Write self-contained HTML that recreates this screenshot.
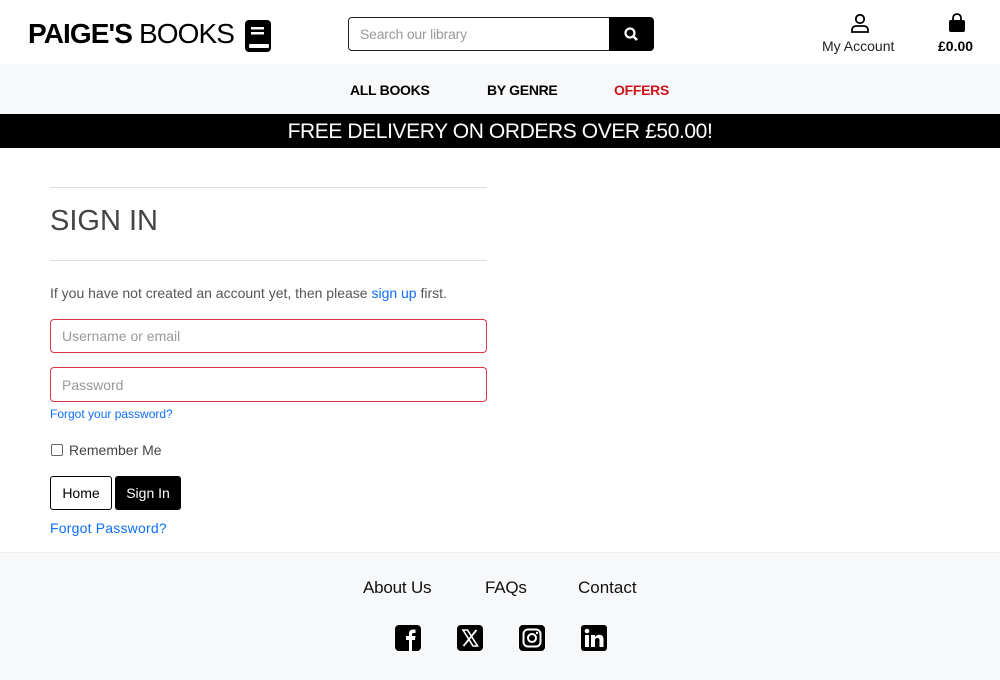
<!DOCTYPE html>
<html><head><style>
*{box-sizing:border-box;margin:0;padding:0}
body{width:1000px;height:680px;overflow:hidden;font-family:"Liberation Sans",sans-serif;background:#fff;color:#555;position:relative}
.a{position:absolute}
a{text-decoration:none}
</style></head><body>
<div class="a" style="left:28px;top:18px;font-size:28px;color:#000;letter-spacing:-0.9px;white-space:nowrap"><b>PAIGE'S</b> BOOKS</div>
<svg class="a" style="left:245px;top:20px" width="26" height="32" viewBox="0 0 26 32"><rect x="0" y="0" width="26" height="32" rx="4" fill="#000"/><rect x="6" y="7" width="13" height="2.5" fill="#fff"/><rect x="6" y="12" width="13" height="2.5" fill="#fff"/><rect x="4" y="24" width="20" height="4" rx="1" fill="#fff"/></svg>
<div class="a" style="left:348px;top:17px;width:262px;height:34px;border:1px solid #222;border-radius:4px 0 0 4px;font-size:14px;color:#999;padding:8px 11px;letter-spacing:-0.2px">Search our library</div>
<div class="a" style="left:609px;top:17px;width:45px;height:34px;background:#000;border-radius:0 4px 4px 0"><svg width="45" height="34"><circle cx="21" cy="16" r="4.5" stroke="#fff" stroke-width="2.2" fill="none"/><line x1="24.5" y1="19.5" x2="28" y2="23" stroke="#fff" stroke-width="2.5"/></svg></div>
<svg class="a" style="left:850px;top:13px" width="20" height="20"><circle cx="10" cy="6" r="4.2" stroke="#000" stroke-width="1.8" fill="none"/><path d="M2 19v-2a4 4 0 0 1 4-4h8a4 4 0 0 1 4 4v2z" stroke="#000" stroke-width="1.8" fill="none"/></svg>
<div class="a" style="left:822px;top:38px;font-size:14px;color:#222;letter-spacing:0">My Account</div>
<svg class="a" style="left:947px;top:13px" width="20" height="20"><path d="M6 7V5a4 4 0 0 1 8 0v2" stroke="#000" stroke-width="1.8" fill="none"/><rect x="2" y="7" width="16" height="12" rx="2" fill="#000"/></svg>
<div class="a" style="left:938px;top:38px;font-size:14px;color:#000;font-weight:bold;letter-spacing:0">£0.00</div>
<div class="a" style="left:0;top:64px;width:1000px;height:50px;background:#f7f8fa"></div>
<div class="a" style="left:350px;top:82px;font-size:14px;font-weight:bold;color:#000;letter-spacing:-0.3px">ALL BOOKS</div>
<div class="a" style="left:487px;top:82px;font-size:14px;font-weight:bold;color:#000;letter-spacing:-0.3px">BY GENRE</div>
<div class="a" style="left:614px;top:82px;font-size:14px;font-weight:bold;color:#d0141b;letter-spacing:-0.3px">OFFERS</div>
<div class="a" style="left:0;top:114px;width:1000px;height:34px;background:#000;color:#fff;font-size:21px;text-align:center;line-height:35px;letter-spacing:-0.4px">FREE DELIVERY ON ORDERS OVER £50.00!</div>
<div class="a" style="left:50px;top:187px;width:437px;border-top:1px solid #ddd"></div>
<div class="a" style="left:50px;top:205px;font-size:29px;color:#444">SIGN IN</div>
<div class="a" style="left:50px;top:260px;width:437px;border-top:1px solid #ddd"></div>
<div class="a" style="left:50px;top:285px;font-size:14px;color:#555;letter-spacing:0">If you have not created an account yet, then please <a style="color:#0d6efd">sign up</a> first.</div>
<div class="a" style="left:50px;top:319px;width:437px;height:34px;border:1px solid #dc3545;border-radius:4px;font-size:14px;color:#999;padding:8px 11px">Username or email</div>
<div class="a" style="left:50px;top:367px;width:437px;height:35px;border:1px solid #dc3545;border-radius:4px;font-size:14px;color:#999;padding:9px 11px">Password</div>
<div class="a" style="left:50px;top:407px;font-size:12px;color:#0d6efd">Forgot your password?</div>
<div class="a" style="left:51px;top:444px;width:12px;height:12px;border:1px solid #666;border-radius:2px"></div>
<div class="a" style="left:69px;top:442px;font-size:14px;color:#444">Remember Me</div>
<div class="a" style="left:50px;top:476px;width:62px;height:34px;border:1px solid #000;border-radius:3px;font-size:14px;color:#000;text-align:center;line-height:32px">Home</div>
<div class="a" style="left:115px;top:476px;width:66px;height:34px;background:#000;border-radius:3px;font-size:14px;color:#fff;text-align:center;line-height:34px">Sign In</div>
<div class="a" style="left:50px;top:520px;font-size:14px;color:#0d6efd;letter-spacing:0.2px">Forgot Password?</div>
<div class="a" style="left:0;top:552px;width:1000px;height:128px;background:#f7f8fa;border-top:1px solid #eee"></div>
<div class="a" style="left:363px;top:578px;font-size:17px;color:#111;letter-spacing:-0.2px">About Us</div>
<div class="a" style="left:485px;top:578px;font-size:17px;color:#111;letter-spacing:-0.2px">FAQs</div>
<div class="a" style="left:578px;top:578px;font-size:17px;color:#111;letter-spacing:0">Contact</div>
<svg class="a" style="left:395px;top:625px" width="26" height="26" viewBox="0 0 26 26"><rect width="26" height="26" rx="4" fill="#000"/><path d="M14 26V15h-3v-4h3V8.5C14 6 15.5 4.5 18 4.5h2.5V8H18.5c-1 0-1.5.5-1.5 1.5V11h3.5l-.5 4h-3v11z" fill="#fff"/></svg>
<svg class="a" style="left:457px;top:625px" width="26" height="26" viewBox="0 0 26 26"><rect width="26" height="26" rx="4" fill="#000"/><path d="M6 5h4.5l10 16H16z" fill="none" stroke="#fff" stroke-width="1.6"/><line x1="19.5" y1="5" x2="6.5" y2="21" stroke="#fff" stroke-width="1.8"/></svg>
<svg class="a" style="left:519px;top:625px" width="26" height="26" viewBox="0 0 26 26"><rect width="26" height="26" rx="4" fill="#000"/><rect x="4.5" y="4.5" width="17" height="17" rx="4.5" fill="none" stroke="#fff" stroke-width="2"/><circle cx="13" cy="13" r="4" fill="none" stroke="#fff" stroke-width="2"/><circle cx="18" cy="8" r="1.2" fill="#fff"/></svg>
<svg class="a" style="left:581px;top:625px" width="26" height="26" viewBox="0 0 26 26"><rect width="26" height="26" rx="3" fill="#000"/><rect x="4" y="10" width="4" height="12" fill="#fff"/><circle cx="6" cy="6" r="2.3" fill="#fff"/><path d="M10 10h4v2c1-1.5 2.5-2.3 4.5-2.3 3 0 4 2 4 5V22h-4v-6.5c0-1.5-.5-2.5-2-2.5s-2.5 1-2.5 2.5V22h-4z" fill="#fff"/></svg>
</body></html>
